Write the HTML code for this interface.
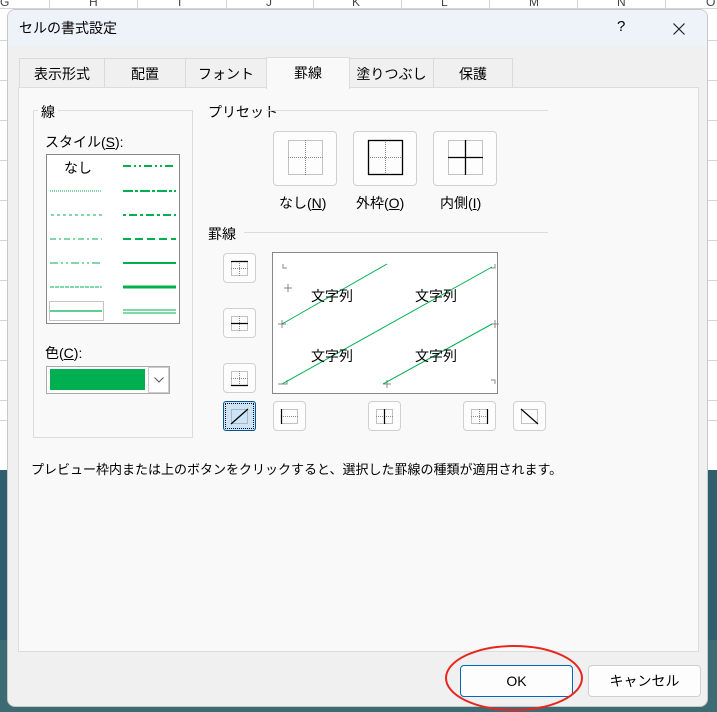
<!DOCTYPE html>
<html><head><meta charset="utf-8"><style>
*{box-sizing:border-box;margin:0;padding:0}
body{width:717px;height:712px;overflow:hidden;position:relative;font-family:"Liberation Sans","Noto Sans CJK JP",sans-serif;font-size:14px;color:#000;background:#fff}
.a{position:absolute}
.bg{left:0;top:0;width:717px;height:712px;background:#fff}
.dlg{left:7px;top:9px;width:701px;height:698px;background:#f0f0f0;border:1px solid #c8c8c8;border-radius:8px;overflow:hidden}
.tb{left:0;top:0;width:701px;height:36px;background:#eef2f9}
.tab{top:48px;height:30px;background:#f0f0f0;border:1px solid #dadada;border-bottom:none;text-align:center;line-height:30px;font-size:14px}
.btn{background:#fdfdfd;border:1px solid #d0d0d0;border-radius:4px}
.t{white-space:nowrap}
</style></head><body>
<div class="a bg"></div>
<svg class="a" style="left:0;top:0" width="717" height="712">
<g stroke="#d4d4d4" stroke-width="1">
<line x1="49.5" y1="0" x2="49.5" y2="712"/><line x1="137.5" y1="0" x2="137.5" y2="712"/><line x1="226.5" y1="0" x2="226.5" y2="712"/><line x1="313.5" y1="0" x2="313.5" y2="712"/><line x1="401.5" y1="0" x2="401.5" y2="712"/><line x1="489.5" y1="0" x2="489.5" y2="712"/><line x1="577.5" y1="0" x2="577.5" y2="712"/><line x1="665.5" y1="0" x2="665.5" y2="712"/>
<line x1="0" y1="8.5" x2="717" y2="8.5"/>
<line x1="0" y1="40.5" x2="717" y2="40.5"/><line x1="0" y1="80.5" x2="717" y2="80.5"/><line x1="0" y1="120.5" x2="717" y2="120.5"/><line x1="0" y1="160.5" x2="717" y2="160.5"/><line x1="0" y1="200.5" x2="717" y2="200.5"/><line x1="0" y1="240.5" x2="717" y2="240.5"/><line x1="0" y1="280.5" x2="717" y2="280.5"/><line x1="0" y1="320.5" x2="717" y2="320.5"/><line x1="0" y1="360.5" x2="717" y2="360.5"/><line x1="0" y1="400.5" x2="717" y2="400.5"/><line x1="0" y1="420.5" x2="717" y2="420.5"/>
</g>
<rect x="0" y="470" width="717" height="242" fill="#2f5f6c"/>
<rect x="0" y="640" width="717" height="72" fill="#3c6b74"/>
<g font-size="12" fill="#444" font-family="Liberation Sans"><text x="0" y="6">G</text><text x="89" y="6">H</text><text x="178" y="6">I</text><text x="266" y="6">J</text><text x="352" y="6">K</text><text x="441" y="6">L</text><text x="529" y="6">M</text><text x="617" y="6">N</text><text x="706" y="6">O</text></g>
</svg>
<div class="a dlg">
<div class="a tb"></div>
<div class="a t" style="left:11px;top:8px;font-size:14px">セルの書式設定</div>
<div class="a t" style="left:609px;top:8px;font-size:15px">?</div>
<svg class="a" style="left:665px;top:13px" width="12" height="12"><path d="M0.5 0.5L11.5 11.5M11.5 0.5L0.5 11.5" stroke="#222" stroke-width="1.2"/></svg>
<div class="a tab" style="left:11px;width:86px">表示形式</div>
<div class="a tab" style="left:96px;width:82px">配置</div>
<div class="a tab" style="left:177px;width:82px">フォント</div>
<div class="a tab" style="left:341px;width:85px">塗りつぶし</div>
<div class="a tab" style="left:425px;width:80px">保護</div>
<div class="a" style="left:10px;top:77px;width:681px;height:565px;background:#f9f9f9;border:1px solid #dcdcdc"></div>
<div class="a tab" style="left:258px;top:47px;width:84px;height:32px;background:#f9f9f9;border-color:#dcdcdc">罫線</div>
<div class="a" style="left:25px;top:100px;width:160px;height:328px;border:1px solid #dcdcdc"></div>
<div class="a t" style="left:30px;top:92px;background:#f9f9f9;padding:0 3px">線</div>
<div class="a t" style="left:37px;top:122px">スタイル(<u>S</u>):</div>
<div class="a" style="left:38px;top:144px;width:134px;height:170px;background:#fff;border:1px solid #888"></div>
<div class="a t" style="left:56px;top:148px">なし</div>
<svg class="a" style="left:38px;top:144px" width="134" height="170" stroke="#00b050">
<path d="M77 12h53" stroke-width="2" stroke-dasharray="8 3 2 3 2 3"/>
<path d="M4 37h52" stroke-width="1" stroke-dasharray="1 1"/>
<path d="M77 37h53" stroke-width="2" stroke-dasharray="10 2 3 2"/>
<path d="M5 61h51" stroke-width="1" stroke-dasharray="3 3"/>
<path d="M77 61h53" stroke-width="2" stroke-dasharray="3 3 8 3"/>
<path d="M4 85h52" stroke-width="1" stroke-dasharray="6 3 2 3"/>
<path d="M77 85h53" stroke-width="2" stroke-dasharray="8 4"/>
<path d="M4 109h52" stroke-width="1" stroke-dasharray="8 3 2 3 2 3"/>
<path d="M77 109h53" stroke-width="2"/>
<path d="M4 133h52" stroke-width="1" stroke-dasharray="4 1"/>
<path d="M77 133h53" stroke-width="3"/>
<rect x="3.5" y="147.5" width="54" height="19" fill="none" stroke="#888" stroke-dasharray="1 1"/>
<path d="M4 157h52" stroke-width="1.2"/>
<path d="M77 156h53M77 159h53" stroke-width="1"/>
</svg>
<div class="a t" style="left:37px;top:333px">色(<u>C</u>):</div>
<div class="a" style="left:38px;top:356px;width:124px;height:28px;background:#fff;border:1px solid #aaa"></div>
<div class="a" style="left:42px;top:359px;width:95px;height:21px;background:#00b050"></div>
<div class="a" style="left:140px;top:357px;width:21px;height:26px;border:1px solid #ccc;background:#fff"></div>
<svg class="a" style="left:146px;top:367px" width="10" height="6"><path d="M0.5 0.5L5 5L9.5 0.5" fill="none" stroke="#555"/></svg>
<div class="a t" style="left:200px;top:92px">プリセット</div>
<div class="a" style="left:258px;top:100px;width:282px;height:1px;background:#dcdcdc"></div>
<div class="a btn" style="left:265px;top:121px;width:64px;height:55px"></div>
<div class="a btn" style="left:345px;top:121px;width:64px;height:55px"></div>
<div class="a btn" style="left:425px;top:121px;width:64px;height:55px"></div>
<svg class="a" style="left:0;top:0" width="701" height="698">
<g fill="none" stroke="#888" stroke-dasharray="1 1">
<rect x="280.5" y="130.5" width="34" height="34"/><path d="M297.5 130v35M280 147.5h35"/>
<path d="M377.5 130v35M360 147.5h35"/>
<rect x="440.5" y="130.5" width="34" height="34"/>
</g>
<rect x="360.5" y="130.5" width="34" height="34" fill="none" stroke="#000" stroke-width="1.3"/>
<path d="M457.5 130v35M440 147.5h35" stroke="#000" stroke-width="1.3"/>
</svg>
<div class="a t" style="left:271px;top:183px">なし(<u>N</u>)</div>
<div class="a t" style="left:348px;top:183px">外枠(<u>O</u>)</div>
<div class="a t" style="left:432px;top:183px">内側(<u>I</u>)</div>
<div class="a t" style="left:200px;top:214px">罫線</div>
<div class="a" style="left:236px;top:222px;width:304px;height:1px;background:#dcdcdc"></div>
<div class="a btn" style="left:215px;top:243px;width:33px;height:30px"></div>
<div class="a btn" style="left:215px;top:298px;width:33px;height:30px"></div>
<div class="a btn" style="left:215px;top:353px;width:33px;height:30px"></div>
<div class="a" style="left:215px;top:391px;width:33px;height:30px;background:#cce4f7;border:1px solid #005499;border-radius:3px;outline:1px dotted #000;outline-offset:-3px"></div>
<div class="a btn" style="left:265px;top:391px;width:33px;height:30px"></div>
<div class="a btn" style="left:360px;top:391px;width:33px;height:30px"></div>
<div class="a btn" style="left:455px;top:391px;width:33px;height:30px"></div>
<div class="a btn" style="left:505px;top:391px;width:33px;height:30px"></div>
<div class="a" style="left:264px;top:242px;width:226px;height:142px;background:#fff;border:1px solid #888"></div>
<svg class="a" style="left:0;top:0" width="701" height="698">
<g fill="none" stroke="#888" stroke-dasharray="1 1">
<rect x="223.5" y="251.5" width="16" height="14"/><path d="M231.5 251v15M223 258.5h17"/>
<rect x="223.5" y="306.5" width="16" height="14"/><path d="M231.5 306v15"/>
<rect x="223.5" y="361.5" width="16" height="14"/><path d="M231.5 361v15M223 368.5h17"/>
<rect x="223.5" y="399.5" width="16" height="14"/>
<rect x="273.5" y="399.5" width="16" height="14"/><path d="M273 406.5h17"/>
<rect x="368.5" y="399.5" width="16" height="14"/><path d="M368 406.5h17"/>
<rect x="463.5" y="399.5" width="16" height="14"/><path d="M471.5 399v15M463 406.5h17"/>
<rect x="513.5" y="399.5" width="16" height="14"/>
</g>
<g stroke="#000" stroke-width="1.2">
<path d="M223 251.5h17M223 313.5h17M223 375.5h17M223 414l17-15M273.5 399v15M376.5 399v15M479.5 399v15M513 399l17 15"/>
</g>
<g stroke="#888" fill="none">
<path d="M275 254v4h4M276 278h8M280 274v8M487 254v4h-4M270 314h8M274 310v8M487 310v8M483 314h8M275 374h4v-4M270 374h8M379 370v8M375 374h8M487 374v-4h-4"/>
</g>
<g stroke="#00b050" stroke-width="1">
<path d="M274 314L379 254M274 374L484 257M375 374L484 314"/>
</g>
<g font-size="14" font-family="Noto Sans CJK JP"><text x="303" y="291">文字列</text><text x="407" y="291">文字列</text><text x="303" y="351">文字列</text><text x="407" y="351">文字列</text></g>
</svg>
<div class="a t" style="left:23px;top:449px;font-size:13px">プレビュー枠内または上のボタンをクリックすると、選択した罫線の種類が適用されます。</div>
<div class="a" style="left:452px;top:655px;width:113px;height:32px;background:#fdfdfd;border:1px solid #0067c0;border-radius:4px;text-align:center;line-height:30px">OK</div>
<div class="a" style="left:580px;top:655px;width:113px;height:32px;background:#fdfdfd;border:1px solid #d0d0d0;border-radius:4px;text-align:center;line-height:30px">キャンセル</div>
</div>
<svg class="a" style="left:0;top:0" width="717" height="712"><ellipse cx="514" cy="678" rx="68" ry="32" fill="none" stroke="#e8261e" stroke-width="2"/></svg>
</body></html>
